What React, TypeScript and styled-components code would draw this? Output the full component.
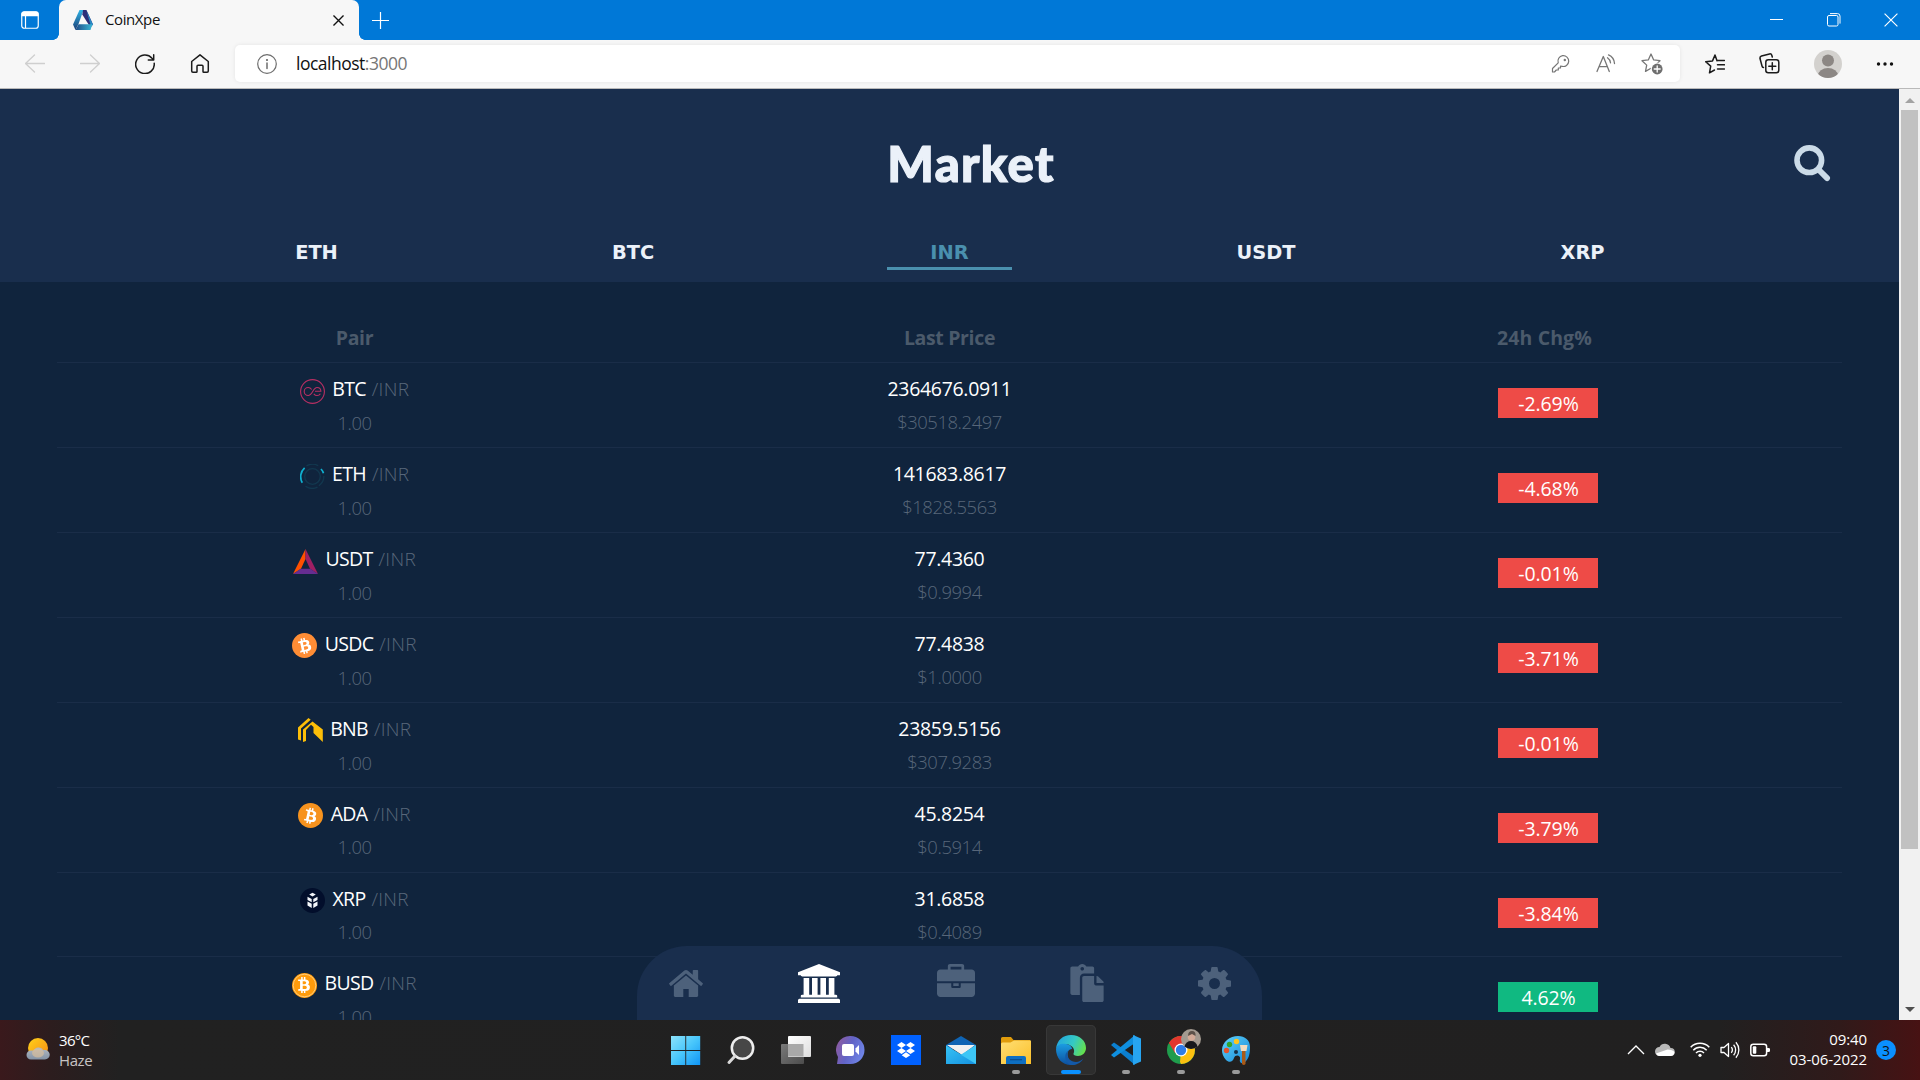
import React from "react";
import styled, { createGlobalStyle } from "styled-components";
import { FaBtc, FaPaste } from "react-icons/fa";

const Global = createGlobalStyle`
  *, *::before, *::after { box-sizing: border-box; }
  body { margin: 0; overflow: hidden; font-family: "Open Sans", "Noto Sans", sans-serif; }
  svg { display: block; flex: none; }
`;

const Screen = styled.div`
  width: 1920px;
  height: 1080px;
  display: flex;
  flex-direction: column;
  overflow: hidden;
  background: #10243d;
`;

/* ---------- browser chrome ---------- */

const TitleBar = styled.div`
  flex: none;
  height: 40px;
  display: flex;
  align-items: center;
  background: #0078d7;
  color: #fff;
`;
const TabActions = styled.div`
  width: 59px;
  display: flex;
  padding-left: 21px;
`;
const BrowserTab = styled.div`
  position: relative;
  width: 300px;
  height: 40px;
  display: flex;
  align-items: center;
  padding: 0 15px 0 14px;
  border-radius: 7px 7px 0 0;
  background: #f7f7f7;
  color: #111;
  &::before, &::after {
    content: "";
    position: absolute;
    bottom: 0;
    width: 6px;
    height: 6px;
  }
  &::before { left: -6px; background: radial-gradient(circle at 0 0, transparent 5.5px, #f7f7f7 6px); }
  &::after { right: -6px; background: radial-gradient(circle at 100% 0, transparent 5.5px, #f7f7f7 6px); }
`;
const TabTitle = styled.span`
  flex: 1;
  margin: 0 0 2px 12px;
  font-size: 15px;
  letter-spacing: -0.4px;
  line-height: 20px;
`;
const NewTab = styled.div`
  margin-left: 13px;
`;
const WindowButtons = styled.div`
  margin-left: auto;
  display: flex;
  gap: 43px;
  padding-right: 22px;
`;
const Toolbar = styled.div`
  flex: none;
  height: 49px;
  display: flex;
  align-items: center;
  padding-left: 25px;
  padding-bottom: 1px;
  background: #f7f7f7;
  border-bottom: 1px solid #b9b9b9;
`;
const ToolGroup = styled.div<{ $gap: number; $left?: number }>`
  display: flex;
  align-items: center;
  gap: ${(p) => p.$gap}px;
  margin-left: ${(p) => p.$left ?? 0}px;
`;
const AddressBar = styled.div`
  width: 1445px;
  height: 37px;
  margin-left: 25px;
  padding: 0 17px 0 22px;
  display: flex;
  align-items: center;
  border-radius: 5px;
  background: #fff;
  box-shadow: 0 0 4px rgba(0, 0, 0, 0.08);
`;
const Url = styled.span`
  flex: 1;
  margin: 0 0 2px 19px;
  font-size: 17.5px;
  letter-spacing: -0.5px;
  line-height: 24px;
  color: #111;
  em { font-style: normal; color: #767676; }
`;
const Avatar = styled.div`
  width: 28px;
  height: 28px;
  border-radius: 50%;
  overflow: hidden;
  background: #d3d1ce;
`;

/* ---------- page ---------- */

const Viewport = styled.div`
  flex: none;
  position: relative;
  height: 931px;
  display: flex;
  overflow: hidden;
`;
const Page = styled.main`
  width: 1899px;
  flex: none;
`;
const Header = styled.header`
  height: 193px;
  display: flex;
  flex-direction: column;
  background: #192e4d;
`;
const HeaderTop = styled.div`
  height: 144px;
  display: grid;
  grid-template-columns: 1fr auto 1fr;
  align-items: center;
  padding: 4px 68px 0 111px;
`;
const Title = styled.h1`
  grid-column: 2;
  margin: 0;
  font-family: Lato, sans-serif;
  font-weight: 900;
  font-size: 49px;
  line-height: 60px;
  letter-spacing: 1.3px;
  -webkit-text-stroke: 1.2px #ebf1f9;
  color: #ebf1f9;
`;
const SearchButton = styled.div`
  justify-self: end;
`;
const MarketTabs = styled.nav`
  display: grid;
  grid-template-columns: repeat(5, 316.5px);
  justify-content: center;
  justify-items: center;
`;
const MarketTab = styled.div<{ $active?: boolean }>`
  width: 125px;
  height: 37px;
  text-align: center;
  font: bold 19.4px/40px "DejaVu Sans", sans-serif;
  color: ${(p) => (p.$active ? "#4a90ae" : "#ebf1f9")};
  border-bottom: 3px solid ${(p) => (p.$active ? "#4a90ae" : "transparent")};
`;
const Table = styled.section`
  width: 1785px;
  margin: 0 auto;
`;
const ColumnHeads = styled.div`
  height: 80.3px;
  display: grid;
  grid-template-columns: repeat(3, 1fr);
  padding-top: 42px;
  text-align: center;
  font-weight: 700;
  font-size: 19.5px;
  letter-spacing: -0.35px;
  line-height: 28px;
  color: #4b5a6b;
  & > :last-child { letter-spacing: 0.1px; }
`;
const Row = styled.div`
  height: 84.88px;
  display: grid;
  grid-template-columns: repeat(3, 1fr);
  border-top: 1px solid #1a2d48;
`;
const Cell = styled.div`
  display: flex;
  flex-direction: column;
  align-items: center;
  padding-top: 9px;
  line-height: 34px;
`;
const PairLine = styled.div`
  height: 34px;
  display: flex;
  align-items: center;
  & > svg { margin-top: 4px; }
`;
const Symbol = styled.span`
  margin: 0 6px 0 7.5px;
  font-size: 19.5px;
  letter-spacing: -0.7px;
  color: #fff;
`;
const Quote = styled.span`
  font-size: 19px;
  font-weight: 350;
  letter-spacing: 0.3px;
  color: #58677a;
`;
const Price = styled.div`
  font-size: 19.5px;
  letter-spacing: -0.32px;
  color: #fff;
`;
const Sub = styled.div<{ $lift?: boolean }>`
  height: 34px;
  margin-top: ${(p) => (p.$lift ? -1 : -0.3)}px;
  font-size: 18.4px;
  font-weight: 350;
  letter-spacing: -0.42px;
  color: #58677a;
`;
const ChangeCell = styled.div`
  display: flex;
  justify-content: center;
  padding: 25px 0 0 7px;
`;
const Change = styled.div<{ $up: boolean }>`
  width: 100px;
  height: 30px;
  padding-left: 1px;
  text-align: center;
  font-size: 19.5px;
  letter-spacing: -0.1px;
  line-height: 32px;
  color: #fff;
  background: ${(p) => (p.$up ? "#10b981" : "#ee4b47")};
`;
const Scrollbar = styled.div`
  width: 21px;
  display: flex;
  flex-direction: column;
  align-items: center;
  padding: 9px 0 8px;
  background: #f1f1f1;
`;
const Thumb = styled.div`
  width: 17px;
  height: 739px;
  margin: 7px 0 auto 0;
  background: #c1c1c1;
`;
const Arrow = styled.div<{ $down?: boolean }>`
  border: solid transparent;
  border-width: ${(p) => (p.$down ? "5px 5px 0" : "0 5px 5px")};
  border-top-color: ${(p) => (p.$down ? "#505050" : "transparent")};
  border-bottom-color: ${(p) => (p.$down ? "transparent" : "#a3a3a3")};
`;
const BottomNav = styled.nav`
  position: absolute;
  left: 637px;
  bottom: 0;
  width: 625px;
  height: 74px;
  display: flex;
  align-items: center;
  border-radius: 50px 50px 0 0;
  background: #192e4d;
`;
const NavItem = styled.div<{ $active?: boolean; $lift?: number; $left: number }>`
  margin-bottom: ${(p) => p.$lift ?? 0}px;
  margin-left: ${(p) => p.$left}px;
  color: ${(p) => (p.$active ? "#fff" : "#4d617b")};
`;

/* ---------- taskbar ---------- */

const Taskbar = styled.footer`
  flex: none;
  height: 60px;
  display: grid;
  grid-template-columns: 658px 605px 657px;
  background: linear-gradient(90deg, #3a191c 0, #2c1d1e 50px, #212121 120px, #212020 1720px, #301a1a 1840px, #471213 1920px);
`;
const Weather = styled.div`
  display: flex;
  align-items: center;
  padding: 0 0 1px 25px;
`;
const Stack = styled.div<{ $align: "left" | "right" }>`
  text-align: ${(p) => p.$align};
  font-size: 15px;
  line-height: 19.7px;
  letter-spacing: -0.3px;
  color: #fff;
`;
const WeatherText = styled(Stack)`
  margin: 2px 0 0 9px;
  letter-spacing: -0.7px;
  span { color: #c8c4c4; letter-spacing: -0.4px; }
`;
const Apps = styled.div`
  display: flex;
`;
const AppSlot = styled.div`
  width: 55px;
  display: flex;
  justify-content: center;
  padding-top: 5px;
`;
const AppTile = styled.div<{ $active?: boolean }>`
  width: 50px;
  height: 50px;
  display: flex;
  flex-direction: column;
  align-items: center;
  padding-top: 10px;
  border-radius: 5px;
  background: ${(p) => (p.$active ? "#2d2d2d" : "transparent")};
  box-shadow: ${(p) => (p.$active ? "inset 0 0 0 1px #383838" : "none")};
`;
const Indicator = styled.div<{ $active?: boolean }>`
  width: ${(p) => (p.$active ? 20 : 8)}px;
  height: 4px;
  margin-top: 5px;
  border-radius: 2px;
  background: ${(p) => (p.$active ? "#0a91ff" : "#9a9a9a")};
`;
const Tray = styled.div`
  display: flex;
  align-items: center;
  justify-content: flex-end;
  padding-right: 24px;
`;
const TrayIcons = styled.div`
  display: flex;
  gap: 10px;
  margin-right: 18px;
  align-items: center;
  & > :nth-child(2) { margin-right: 5px; }
`;
const Clock = styled(Stack)`
  width: 79px;
  margin-right: 9px;
  letter-spacing: -0.08px;
`;
const Notice = styled.div`
  width: 20px;
  height: 20px;
  border-radius: 50%;
  text-align: center;
  font-size: 14px;
  line-height: 21px;
  color: #111;
  background: #0a8fff;
`;

/* ---------- small icons ---------- */

const line = { fill: "none", stroke: "currentColor", strokeLinecap: "round", strokeLinejoin: "round" } as const;

const TabPanelIcon = () => (
  <svg width="18" height="18" viewBox="0 0 18 18">
    <rect x="0.75" y="0.75" width="16.5" height="16.5" rx="2.5" fill="none" stroke="#fff" strokeWidth="1.2" />
    <path d="M.5 3A2.5 2.5 0 0 1 3 .5h12A2.5 2.5 0 0 1 17.500 3v2.200H.5z" fill="#fff" />
    <path d="M4.500 5v12" stroke="#fff" strokeWidth="1.200" />
  </svg>
);
const Favicon = () => (
  <svg width="20" height="20" viewBox="0 0 20 20">
    <defs>
      <linearGradient id="fav" x1="0" y1="0" x2="0" y2="1">
        <stop offset="0" stopColor="#2fb4e6" /><stop offset="1" stopColor="#1c3f77" />
      </linearGradient>
      <linearGradient id="fav2" x1="0" y1="0" x2="1" y2="0">
        <stop offset="0" stopColor="#1e4a86" /><stop offset="1" stopColor="#3ab8d6" />
      </linearGradient>
    </defs>
    <path d="M6.500 0h4L5.500 14l-3 6L0 14.500z" fill="url(#fav)" />
    <path d="M10 0h3.500L20 14.500l-2.500 3L9.300 4.500z" fill="#2b2e78" />
    <path d="M13.500 1 20 14.500l-2 2z" fill="#2688c4" />
    <path d="M5.500 14.300h13.800L17.500 20h-15z" fill="url(#fav2)" />
  </svg>
);
const CloseIcon = ({ size, w }: { size: number; w: number }) => (
  <svg width={size} height={size} viewBox="0 0 12 12" {...line} strokeWidth={w} strokeLinecap="butt"><path d="m.5.5 11 11m0-11-11 11" /></svg>
);
const ArrowIcon = ({ flip }: { flip?: boolean }) => (
  <svg width="20" height="20" viewBox="0 0 20 20" {...line} stroke="#cfcfcf" strokeWidth="1.300">
    <path d={flip ? "M.5 9.500h19m-9-8.500 9 8.500-9 8.500" : "M19.500 9.500H.5m9-8.500L.5 9.500l9 8.500"} />
  </svg>
);
const ReloadIcon = () => (
  <svg width="20" height="20" viewBox="0 0 20 20" {...line} stroke="#1b1b1b" strokeWidth="1.500">
    <path d="M19.200 9.200A9.300 9.300 0 1 1 17 4.200l1.500 1.500M18.700.8v5.200h-5.400" />
  </svg>
);
const HomeOutline = () => (
  <svg width="20" height="20" viewBox="0 0 20 20" {...line} stroke="#1b1b1b" strokeWidth="1.500">
    <path d="M10 .8 1.700 7.500v9.500q0 1.200 1.200 1.200h3.300q.8 0 .8-.8v-5.200q0-1 1-1h4q1 0 1 1v5.200q0 .8.800.8h3.300q1.200 0 1.200-1.200V7.500z" />
  </svg>
);
const InfoIcon = () => (
  <svg width="20" height="20" viewBox="0 0 20 20" {...line} stroke="#6d6d6d" strokeWidth="1.200">
    <circle cx="10" cy="10" r="9.300" /><path d="M10 9v5.500" strokeWidth="1.500" /><circle cx="10" cy="6" r=".5" fill="#6d6d6d" />
  </svg>
);
const KeyIcon = () => (
  <svg width="20" height="20" viewBox="0 0 20 20" {...line} stroke="#767676" strokeWidth="1.200">
    <path d="M7.200 8.800A5.400 5.400 0 1 1 11 12.300L9.500 12v2H7.300v2H5.300l-1.800 2H1.500v-3.500z" /><circle cx="13.800" cy="6" r=".6" fill="#767676" />
  </svg>
);
const ReadAloudIcon = () => (
  <svg width="20" height="20" viewBox="0 0 20 20" {...line} stroke="#767676" strokeWidth="1.300">
    <path d="m1 17.500 6.300-15 6 15M3 12.700h8.500M11.500 3.800a7 7 0 0 1 3 5M12.500.9a10 10 0 0 1 6 8.600" />
  </svg>
);
const starPath = "M10 1l2.700 5.900 6.300.8-4.700 4.400 1.200 6.300L10 15.300l-5.500 3.100 1.200-6.300L1 7.700l6.300-.8z";
const AddFavoriteIcon = () => (
  <svg width="22" height="22" viewBox="0 0 22 22" {...line} stroke="#767676" strokeWidth="1.300">
    <path d={starPath} /><circle cx="16.200" cy="16" r="6.500" fill="#fff" stroke="none" />
    <circle cx="16.200" cy="16" r="5.400" fill="#6f6f6f" stroke="none" /><path d="M16.200 13v6m-3-3h6" stroke="#fff" />
  </svg>
);
const FavoritesIcon = () => (
  <svg width="20" height="20" viewBox="0 0 20 20" {...line} stroke="#1b1b1b" strokeWidth="1.500">
    <path d="M12 6.800 10 1 7.500 6.900.7 7.700l5 4.400-1.200 6.700 5-2.800M12 6.500h7.500M12.500 10.800h7M12.500 15h7" />
  </svg>
);
const CollectionsIcon = () => (
  <svg width="21" height="21" viewBox="0 0 21 21" {...line} stroke="#1b1b1b" strokeWidth="1.500">
    <rect x="6.800" y="6.800" width="13" height="13" rx="2.500" /><path d="M13.300 9.800v7m-3.500-3.500h7M4.500 14.500q-1.200-.2-1.500-1.500L1 5.500Q.7 3.500 2.500 3L10.500.9q1.800-.4 2.300 1.300l.5 1.800" />
  </svg>
);
const SearchIcon = () => (
  <svg width="37" height="37" viewBox="0 0 37 37" fill="none" stroke="#cbdbe8">
    <circle cx="15.300" cy="15.200" r="12.300" strokeWidth="5.600" /><path d="m24.500 24.500 8.600 8.600" strokeWidth="5.800" strokeLinecap="round" />
  </svg>
);

/* ---------- bottom navigation glyphs ---------- */

const Glyph = ({ d, box, w, h }: { d: string; box: string; w: number; h: number }) => (
  <svg width={w} height={h} viewBox={box} preserveAspectRatio="none" fill="currentColor"><path d={d} /></svg>
);
const homeD = "M1472 992v480q0 26-19 45t-45 19h-384v-384h-256v384h-384q-26 0-45-19t-19-45v-480q0-1 .5-3t.5-3l575-474 575 474q1 2 1 6zm223-69l-62 74q-8 9-21 11h-3q-13 0-21-7l-692-577-692 577q-12 8-24 7-13-2-21-11l-62-74q-8-10-7-23.500t11-21.500l719-599q32-26 76-26t76 26l244 204v-195q0-14 9-23t23-9h192q14 0 23 9t9 23v408l219 182q10 8 11 21.500t-7 23.500z";
const bankD = "M960 0l960 384v128h-128q0 26-20.500 45t-48.500 19h-1526q-28 0-48.500-19t-20.500-45h-128v-128zM256 640h256v768h128v-768h256v768h128v-768h256v768h128v-768h256v768h59q28 0 48.500 19t20.500 45v64h-1664v-64q0-26 20.500-45t48.500-19h59zM1851 1600q28 0 48.500 19t20.500 45v128h-1920v-128q0-26 20.500-45t48.500-19z";
const caseD = "M640 256h512v-128h-512v128zm1152 640v480q0 66-47 113t-113 47h-1472q-66 0-113-47t-47-113v-480h672v160q0 26 19 45t45 19h320q26 0 45-19t19-45v-160h672zm-768 0v128h-256v-128h256zm768-480v384h-1792v-384q0-66 47-113t113-47h352v-160q0-40 28-68t68-28h576q40 0 68 28t28 68v160h352q66 0 113 47t47 113z";
const cogD = "M1152 896q0-106-75-181t-181-75-181 75-75 181 75 181 181 75 181-75 75-181zm512-109v222q0 12-8 23t-20 13l-185 28q-19 54-39 91 35 50 107 138 10 12 10 25t-9 23q-27 37-99 108t-94 71q-12 0-26-9l-138-108q-44 23-91 38-16 136-29 186-7 28-36 28h-222q-14 0-24.500-8.500t-11.500-21.500l-28-184q-49-16-90-37l-141 107q-10 9-25 9-14 0-25-11-126-114-165-168-7-10-7-23 0-12 8-23 15-21 51-66.500t54-70.500q-27-50-41-99l-183-27q-13-2-21-12.500t-8-23.500v-222q0-12 8-23t19-13l186-28q14-46 39-92-40-57-107-138-10-12-10-24 0-10 9-23 26-36 98.500-107.500t94.500-71.500q13 0 26 10l138 107q44-23 91-38 16-136 29-186 7-28 36-28h222q14 0 24.500 8.500t11.500 21.500l28 184q49 16 90 37l142-107q9-9 24-9 13 0 25 10 129 119 165 170 7 8 7 22 0 12-8 23-15 21-51 66.500t-54 70.500q26 50 41 98l183 28q13 2 21 12.500t8 23.500z";

/* ---------- coins ---------- */

const Coin = ({ children }: { children: React.ReactNode }) => (
  <svg width="25" height="25" viewBox="0 0 25 25">{children}</svg>
);
const BitcoinCoin = ({ fill, tilt, ring }: { fill: string; tilt: number; ring?: boolean }) => (
  <Coin>
    <circle cx="12.500" cy="12.500" r="12.500" fill={fill} />
    {ring && <circle cx="12.500" cy="12.500" r="11.300" fill="none" stroke="#ffe0a6" strokeWidth=".7" />}
    <g transform={`rotate(${tilt} 12.500 12.500)`}>
      <FaBtc x={ring ? 4 : 4.800} y={ring ? 4 : 4.800} width={ring ? 17 : 15.500} height={ring ? 17 : 15.500} color="#fff" />
    </g>
  </Coin>
);
const coins: Record<string, React.ReactNode> = {
  BTC: (
    <Coin>
      <g fill="none" stroke="#b92f63" strokeWidth="1.100">
        <circle cx="12.500" cy="12.500" r="11.900" />
        <path d="M11.700 10.500C10.500 8.900 9.500 8.500 8.200 8.500a4 4 0 0 0 0 8c4 0 5-8 8.800-8 2.200 0 3.800 1.600 3.900 3.700H15m-1.200 2.600c1 1.200 2 1.700 3.200 1.700 1.400 0 2.700-.6 3.400-1.800" />
      </g>
    </Coin>
  ),
  ETH: (
    <Coin>
      <g fill="none" stroke="#12384f" strokeWidth="1.300">
        <circle cx="12.500" cy="12.500" r="7.800" />
        <path d="M6.500 1.900a12 12 0 0 1 11.700-.2M23.900 12a12 12 0 0 1-5 9.800M17.500 23.200a12 12 0 0 1-12-1" />
      </g>
      <path d="M4.600 3.800A12 12 0 0 0 2.300 18.700M21 5a12 12 0 0 1 2.500 4.200" fill="none" stroke="#0fb0d0" strokeWidth="1.700" />
    </Coin>
  ),
  USDT: (
    <Coin>
      <path d="M12.500 0v10L8 19.800 0 25z" fill="#ff5000" />
      <path d="M12.500 0 25 25l-8-5.200L12.500 10z" fill="#9e1f63" />
      <path d="m0 25 7.700-5.200h9.600L25 25z" fill="#662d91" />
    </Coin>
  ),
  USDC: <BitcoinCoin fill="#ff8d35" tilt={-12} />,
  BNB: (
    <Coin>
      <path d="M0 21.500V9.500L10.500 0l2.200 1.700L3 10.500v12zM5 24V11.500l9.500-8L24.800 11.500V24l-9.300-9V9L13 6.800 8 12v11z" fill="#fcbe08" />
    </Coin>
  ),
  ADA: <BitcoinCoin fill="#f7931e" tilt={12} />,
  XRP: (
    <Coin>
      <circle cx="12.500" cy="12.500" r="12.500" fill="#020e2b" />
      <path d="m12.500 4.800 3.300 1.800-3.300 2-3.300-2zM7.500 8.800l4.200 2.300v3.200L7.500 12zM17.500 8.800l-4.200 2.300v3.200l4.200-2.300zM7.500 13.500l4.200 2.300v4.200l-4.200-2.500zM17.500 13.500l-4.200 2.300v4.200l4.200-2.500z" fill="#f4f6fa" />
    </Coin>
  ),
  BUSD: <BitcoinCoin fill="#ff9b0b" tilt={0} ring />,
};

const rows: { sym: string; price?: string; usd?: string; chg: string }[] = [
  { sym: "BTC", price: "2364676.0911", usd: "$30518.2497", chg: "-2.69%" },
  { sym: "ETH", price: "141683.8617", usd: "$1828.5563", chg: "-4.68%" },
  { sym: "USDT", price: "77.4360", usd: "$0.9994", chg: "-0.01%" },
  { sym: "USDC", price: "77.4838", usd: "$1.0000", chg: "-3.71%" },
  { sym: "BNB", price: "23859.5156", usd: "$307.9283", chg: "-0.01%" },
  { sym: "ADA", price: "45.8254", usd: "$0.5914", chg: "-3.79%" },
  { sym: "XRP", price: "31.6858", usd: "$0.4089", chg: "-3.84%" },
  { sym: "BUSD", chg: "4.62%" },
];

/* ---------- taskbar drawings, each on a 30px square ---------- */

const Pic = ({ children }: { children: React.ReactNode }) => (
  <svg width="30" height="30" viewBox="0 0 30 30">{children}</svg>
);
const grad = (id: string, a: string, b: string, diag = true) => (
  <linearGradient id={id} x1="0" y1="0" x2={diag ? "1" : "0"} y2="1"><stop offset="0" stopColor={a} /><stop offset="1" stopColor={b} /></linearGradient>
);
const WindowsPic = () => (
  <Pic><defs><linearGradient id="win" gradientUnits="userSpaceOnUse" x1="0" y1="0" x2="30" y2="30"><stop offset="0" stopColor="#8fe4fb" /><stop offset=".5" stopColor="#48c6fb" /><stop offset="1" stopColor="#0e93f5" /></linearGradient></defs>
    <path d="M0 1h14.300v14H0zM15.200 1h14v14h-14zM0 16h14.300v14H0zM15.200 16h14v14h-14z" fill="url(#win)" /></Pic>
);
const SearchPic = () => (
  <Pic><circle cx="16.500" cy="13" r="10.700" fill="#474747" stroke="#eee" strokeWidth="2.500" /><path d="m9 21-6 6.500" stroke="#d9d9d9" strokeWidth="3" strokeLinecap="round" /></Pic>
);
const TaskViewPic = () => (
  <Pic><defs>{grad("tv", "#fff", "#dedede")}{grad("tv2", "#7a7a7a", "#4c4c4c")}</defs>
    <rect y="9" width="23" height="20" rx="1" fill="url(#tv2)" /><rect x="7" y="1" width="23" height="21" rx="1" fill="url(#tv)" /><path d="M7 9h15.500v12.500H8q-1 0-1-1z" fill="#a9a9a9" /></Pic>
);
const ChatPic = () => (
  <Pic><defs><linearGradient id="chat" x1="0" y1=".2" x2="1" y2=".6"><stop offset="0" stopColor="#8e5a9e" /><stop offset=".5" stopColor="#6264c7" /><stop offset="1" stopColor="#6f86e8" /></linearGradient></defs>
    <path d="M14.500 1a14 14 0 1 1 0 28H1L2 22A14 14 0 0 1 14.500 1z" fill="url(#chat)" /><rect x="6" y="9" width="12" height="12" rx="2" fill="#fff" /><path d="m19.500 13.500 3.500-3.500v10l-3.500-3.500z" fill="#fff" /></Pic>
);
const DropboxPic = () => (
  <Pic><path d="M0 0h30v30H0z" fill="#0061ff" /><path d="m10.500 7 4.500 3-4.500 3L6 10zM19.500 7l4.500 3-4.500 3-4.500-3zM10.500 13l4.500 3-4.500 3L6 16zM19.500 13l4.500 3-4.500 3-4.500-3zM15 17.300l4.300 2.900-4.300 2.800-4.300-2.800z" fill="#fff" /></Pic>
);
const MailPic = () => (
  <Pic><defs>{grad("mail", "#36c3f5", "#1591e0")}</defs>
    <path d="M0 10 15 1l15 9v4H0z" fill="#0f64b4" /><path d="M1 10h28L16 20z" fill="#f1f1f1" /><path d="M0 10.500 16 20v9H0z" fill="#23a3ea" /><path d="M30 10v19H4l-2-1z" fill="#3dc6f6" /><path d="M0 10.500 30 29H1q-1 0-1-1z" fill="url(#mail)" /></Pic>
);
const FolderPic = () => (
  <Pic><defs>{grad("fold", "#ffdf75", "#fbc02a")}</defs>
    <path d="M0 3.500Q0 2 1.500 2H10l2.500 3H29v8H0z" fill="#e09c0c" /><path d="M0 9q0-1.500 1.500-1.500h8L13 5.500h17V29H0z" fill="url(#fold)" /><path d="M5 29v-6q0-2 2-2h16q2 0 2 2v6z" fill="#0e6fc2" /><path d="M9 24.700h12" stroke="#0a4c8c" strokeWidth="1.200" /></Pic>
);
const EdgePic = () => (
  <Pic><defs><linearGradient id="e1" x1="0" y1=".3" x2="1" y2=".6"><stop offset="0" stopColor="#22a6e0" /><stop offset=".55" stopColor="#35c9c4" /><stop offset="1" stopColor="#66e04a" /></linearGradient>{grad("e2", "#1b9de2", "#0c4f9e", false)}</defs>
    <path d="M0 14C1 5 7 0 15 0c9 0 15 6 15 13 0 5-4 8-8 8-3 0-5-1-4.500-2.500C19.500 15 17 10 10 9 5 9 1 11 0 14z" fill="url(#e1)" />
    <path d="M0 14C1 10 5 8 10 9c4 .5 6 3 6 5-4 0-5 4-4 8 1 4 5 8 9 7.500-2 .5-4 .5-6 .5C6 30 0 23 0 14z" fill="url(#e2)" />
    <path d="M12.500 15.500C9 20 13 27 20 27c3 0 5-1.500 7.500-3.500C25 28 20 30.500 15 30 9 28 7 19 12.500 15.500z" fill="#1359a8" /></Pic>
);
const CodePic = () => (
  <Pic><path d="m0 10 3-2.500L24 22v8z" fill="#0b7fd0" /><path d="m0 20 3 2.500L24 8V0z" fill="#0f8fdf" /><path d="M22 0 30 3.500v23L22 30z" fill="#27a5f2" /></Pic>
);
const ChromePic = () => (
  <Pic><circle cx="15" cy="15" r="14" fill="#1f9c4c" /><path d="M15 15 2.900 8A14 14 0 0 1 27.100 8z" fill="#e2372c" /><path d="M15 15 27.100 8A14 14 0 0 1 15 29l-1-2z" fill="#fcc010" /><path d="M2.900 8 9 18l6-9h12.600l-.5-1A14 14 0 0 0 2.900 8z" fill="#e2372c" />
    <circle cx="15" cy="15" r="6.500" fill="#fff" /><circle cx="15" cy="15" r="5.200" fill="#2f7de8" /></Pic>
);
const ChromeWrap = styled.div`
  position: relative;
`;
const ProfileBadge = styled.svg`
  position: absolute;
  left: 15px;
  top: -6px;
`;
const PaintPic = () => (
  <Pic><defs>{grad("pnt", "#5fd3fa", "#1687d8")}</defs>
    <path d="M17 1C24 1 29 5 29 12c0 7-1 12-6 16-3 1-5-1-4-4 1-4-5-5-6-1-1 4-5 5-8 2C2 22 1 18 1 15 1 7 9 1 17 1z" fill="url(#pnt)" />
    <circle cx="15.500" cy="6.500" r="2.700" fill="#ffc51c" /><circle cx="8.500" cy="9.500" r="2.700" fill="#30a42c" /><circle cx="5.500" cy="15.500" r="2.700" fill="#e3532c" /><circle cx="15" cy="17" r="2" fill="#16324a" />
    <path d="M19 10h7.500l-1 6h-5.500z" fill="#f2dcc0" /><path d="M21 16h3.500v13q-1.700 2-3.500 0z" fill="#a95a18" /></Pic>
);
const apps: { pic: React.ReactNode; open?: boolean; active?: boolean }[] = [
  { pic: <WindowsPic /> }, { pic: <SearchPic /> }, { pic: <TaskViewPic /> }, { pic: <ChatPic /> }, { pic: <DropboxPic /> }, { pic: <MailPic /> },
  { pic: <FolderPic />, open: true },
  { pic: <EdgePic />, open: true, active: true },
  { pic: <CodePic />, open: true },
  {
    pic: (
      <ChromeWrap>
        <ChromePic />
        <ProfileBadge width="20" height="20" viewBox="0 0 20 20">
          <circle cx="10" cy="10" r="10" fill="#a39a90" /><circle cx="10.500" cy="8" r="3.800" fill="#d3ab98" /><path d="M7 7q0-5 4-5t3.500 5L11 5z" fill="#5c5149" /><path d="M3.500 17.500Q5 12 10 12t6.500 5.500a10 10 0 0 1-13 0z" fill="#17181c" />
        </ProfileBadge>
      </ChromeWrap>
    ),
    open: true,
  },
  { pic: <PaintPic />, open: true },
];

export default function App() {
  return (
    <Screen>
      <Global />
      <TitleBar>
        <TabActions><TabPanelIcon /></TabActions>
        <BrowserTab>
          <Favicon />
          <TabTitle>CoinXpe</TabTitle>
          <CloseIcon size={11} w={1.500} />
        </BrowserTab>
        <NewTab><svg width="17" height="17" viewBox="0 0 17 17"><path d="M8.500 0v17M0 8.500h17" stroke="#fff" strokeWidth="1.200" /></svg></NewTab>
        <WindowButtons>
          <svg width="14" height="14" viewBox="0 0 14 14"><path d="M0 6.500h13" stroke="#fff" /></svg>
          <svg width="14" height="14" viewBox="0 0 14 14" fill="none" stroke="#fff"><rect x=".5" y="2.500" width="10.500" height="10.500" rx="1.500" /><path d="M3 .6h7.500q2.500 0 2.500 2.500v7.500" /></svg>
          <CloseIcon size={14} w={1} />
        </WindowButtons>
      </TitleBar>
      <Toolbar>
        <ToolGroup $gap={35}><ArrowIcon /><ArrowIcon flip /><ReloadIcon /><HomeOutline /></ToolGroup>
        <AddressBar>
          <InfoIcon />
          <Url>localhost<em>:3000</em></Url>
          <ToolGroup $gap={25}><KeyIcon /><ReadAloudIcon /><AddFavoriteIcon /></ToolGroup>
        </AddressBar>
        <ToolGroup $gap={34} $left={25}>
          <FavoritesIcon />
          <CollectionsIcon />
          <Avatar><svg width="28" height="28" viewBox="0 0 28 28" fill="#8c8784"><circle cx="14" cy="10.500" r="6" /><ellipse cx="14" cy="25.500" rx="10" ry="7.500" /></svg></Avatar>
          <svg width="20" height="20" viewBox="0 0 20 20" fill="#111"><circle cx="2.500" cy="10" r="1.700" /><circle cx="9" cy="10" r="1.700" /><circle cx="15.500" cy="10" r="1.700" /></svg>
        </ToolGroup>
      </Toolbar>
      <Viewport>
        <Page>
          <Header>
            <HeaderTop>
              <Title>Market</Title>
              <SearchButton><SearchIcon /></SearchButton>
            </HeaderTop>
            <MarketTabs>
              {["ETH", "BTC", "INR", "USDT", "XRP"].map((t) => <MarketTab key={t} $active={t === "INR"}>{t}</MarketTab>)}
            </MarketTabs>
          </Header>
          <Table>
            <ColumnHeads><span>Pair</span><span>Last Price</span><span>24h Chg%</span></ColumnHeads>
            {rows.map(({ sym, price, usd, chg }) => (
              <Row key={sym}>
                <Cell>
                  <PairLine>{coins[sym]}<Symbol>{sym}</Symbol><Quote>/INR</Quote></PairLine>
                  <Sub>1.00</Sub>
                </Cell>
                <Cell><Price>{price}</Price><Sub $lift>{usd}</Sub></Cell>
                <ChangeCell><Change $up={!chg.startsWith("-")}>{chg}</Change></ChangeCell>
              </Row>
            ))}
          </Table>
        </Page>
        <Scrollbar><Arrow /><Thumb /><Arrow $down /></Scrollbar>
        <BottomNav>
          <NavItem $left={32}><Glyph d={homeD} box="89 253 1614 1283" w={34} h={27} /></NavItem>
          <NavItem $left={95} $active><Glyph d={bankD} box="0 0 1920 1792" w={42} h={39} /></NavItem>
          <NavItem $left={97} $lift={5}><Glyph d={caseD} box="0 0 1792 1536" w={38} h={33} /></NavItem>
          <NavItem $left={93}><FaPaste size={38} /></NavItem>
          <NavItem $left={92}><Glyph d={cogD} box="128 128 1536 1536" w={33} h={33} /></NavItem>
        </BottomNav>
      </Viewport>
      <Taskbar>
        <Weather>
          <svg width="25" height="25" viewBox="0 0 25 25">
            <defs>{grad("sun", "#ffd21a", "#f58a14")}{grad("cl", "#b3bac3", "#8493a5", false)}</defs>
            <circle cx="13" cy="11" r="10" fill="url(#sun)" />
            <path d="M6 22.500a4.500 4.500 0 0 1 0-9h2.500a5.500 5.500 0 0 1 9.500-.5h2a4.700 4.700 0 0 1 0 9.500z" fill="url(#cl)" /><ellipse cx="13" cy="16" rx="6" ry="4.500" fill="#d8bf9c" opacity=".7" />
          </svg>
          <WeatherText $align="left">36°C<br /><span>Haze</span></WeatherText>
        </Weather>
        <Apps>
          {apps.map((a, i) => (
            <AppSlot key={i}><AppTile $active={a.active}>{a.pic}{a.open && <Indicator $active={a.active} />}</AppTile></AppSlot>
          ))}
        </Apps>
        <Tray>
          <TrayIcons>
            <svg width="18" height="20" viewBox="0 0 18 20"><path d="m1 14 8-8 8 8" fill="none" stroke="#fff" strokeWidth="1.300" /></svg>
            <svg width="20" height="20" viewBox="0 0 20 20"><path d="M4.500 16a4.500 4.500 0 0 1 0-9A6 6 0 0 1 15.500 8a4 4 0 0 1 .5 8z" fill="#b9b9b9" /><path d="M4 16q-2-.5-3-2.500L12.500 9.500q5 0 7 2.500-.3 3.500-3.500 4z" fill="#fff" /></svg>
            <svg width="20" height="20" viewBox="0 0 20 20" fill="none" stroke="#fff" strokeWidth="1.500"><path d="M.7 7.200a13 13 0 0 1 18.600 0M3.300 10.200a9.300 9.300 0 0 1 13.400 0M6 13a5.500 5.500 0 0 1 8 0" /><circle cx="10" cy="15.300" r="1.600" fill="#fff" stroke="none" /></svg>
            <svg width="20" height="20" viewBox="0 0 20 20" fill="none" stroke="#fff" strokeWidth="1.300" strokeLinejoin="round"><path d="M1 7.500h3L8.500 3.500v13L4 12.500H1zM11.300 7.200a4.500 4.500 0 0 1 0 5.600M13.600 4.700a8 8 0 0 1 0 10.600M15.900 2.300a11.500 11.500 0 0 1 0 15.400" /></svg>
            <svg width="20" height="20" viewBox="0 0 20 20"><rect x=".8" y="4.300" width="15.800" height="11.500" rx="2.500" fill="none" stroke="#fff" strokeWidth="1.500" /><path d="M17 8h1.500q1.500 0 1.500 1v2q0 1-1.500 1H17z" fill="#fff" /><rect x="2.800" y="6.300" width="3.500" height="7.500" rx="1" fill="#fff" /></svg>
          </TrayIcons>
          <Clock $align="right">09:40<br />03-06-2022</Clock>
          <Notice>3</Notice>
        </Tray>
      </Taskbar>
    </Screen>
  );
}
